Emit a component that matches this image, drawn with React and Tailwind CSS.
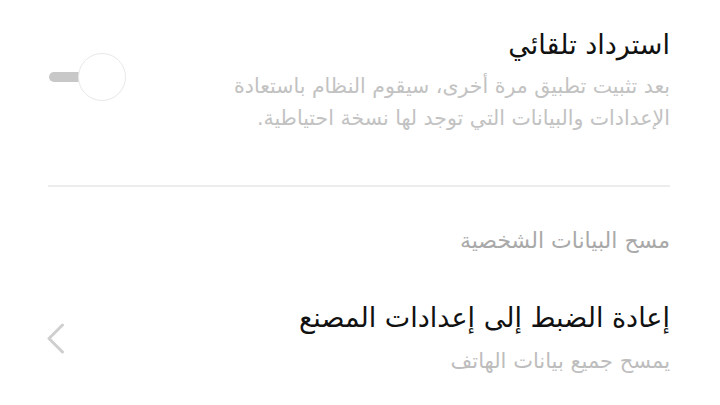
export default function App() {
  return (
    <div dir="rtl" className="w-[720px] h-[405px] bg-white overflow-hidden" style={{ fontFamily: '"DejaVu Sans", sans-serif' }}>
      <div className="mr-[50px] ml-[48px]">
        <div className="flex pt-[27px]">
          <div className="flex-1">
            <div className="text-[27px] leading-[36px] text-[#111111]">استرداد تلقائي</div>
            <div className="text-[20.5px] leading-[32px] text-[#c2c2c2] mt-[7px]">
              بعد تثبيت تطبيق مرة أخرى، سيقوم النظام باستعادة
              <br />
              الإعدادات والبيانات التي توجد لها نسخة احتياطية.
            </div>
          </div>
          <div className="relative w-[78px] h-[48px] mt-[26px]">
            <div className="absolute left-[1px] top-[19px] w-[40px] h-[10px] rounded-full bg-[#c8c8c8]" />
            <div className="absolute left-[30px] top-0 w-[48px] h-[48px] rounded-full bg-white border border-[#e8e8e8]" />
          </div>
        </div>
        <div className="h-[2px] bg-[#ececec] mt-[51px]" />
        <div className="text-[22px] leading-[28px] text-[#a9a9a9] mt-[40px]">مسح البيانات الشخصية</div>
        <div className="flex items-center mt-[45px]">
          <div className="flex-1">
            <div className="text-[27px] leading-[36px] text-[#111111]">إعادة الضبط إلى إعدادات المصنع</div>
            <div className="text-[21px] leading-[28px] text-[#bdbdbd] mt-[11px]">يمسح جميع بيانات الهاتف</div>
          </div>
          <svg width="18" height="32" viewBox="0 0 18 32" className="-ml-[1px]">
            <path d="M15.5 3 L2 16.5 L15.5 30" fill="none" stroke="#cfcfcf" strokeWidth="3" strokeLinecap="round" strokeLinejoin="round" />
          </svg>
        </div>
      </div>
    </div>
  );
}
